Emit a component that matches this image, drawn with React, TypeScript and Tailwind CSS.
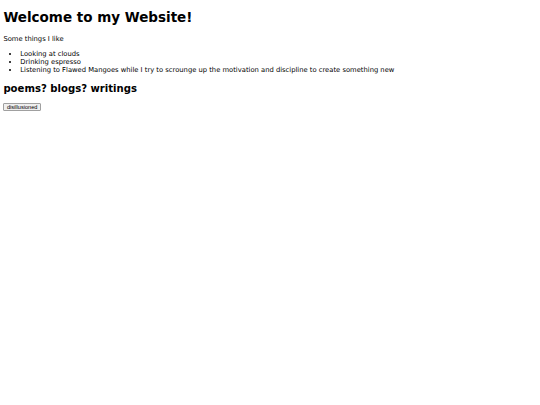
import React from "react";

function App() {
  const likes = [
    "Looking at clouds",
    "Drinking espresso",
    "Listening to Flawed Mangoes while I try to scrounge up the motivation and discipline to create something new",
  ];

  return (
    <div className="min-h-[405px] w-full bg-white px-[3.4px] pt-[9px] font-['DejaVu_Sans',sans-serif] text-black">
      <h1 className="text-[13.5px] font-bold leading-[normal]">Welcome to my Website!</h1>

      <p className="mt-[9.8px] text-[6.78px] leading-[8.3px]">Some things I like</p>

      <ul className="mt-[6.5px] list-disc pl-[16.9px] text-[6.78px] leading-[8.4px]">
        {likes.map((item, index) => (
          <li key={index}>{item}</li>
        ))}
      </ul>

      <h2 className="mt-[8.4px] text-[10.1px] font-bold leading-[normal]">poems? blogs? writings</h2>

      <button className="mt-[8.6px] block rounded-[1px] border border-[#a0a0a0] bg-[#efefef] px-[2.5px] py-0 font-['Liberation_Sans',sans-serif] text-[5.6px] leading-[6.6px] text-black">
        disillusioned
      </button>
    </div>
  );
}

export default App;
